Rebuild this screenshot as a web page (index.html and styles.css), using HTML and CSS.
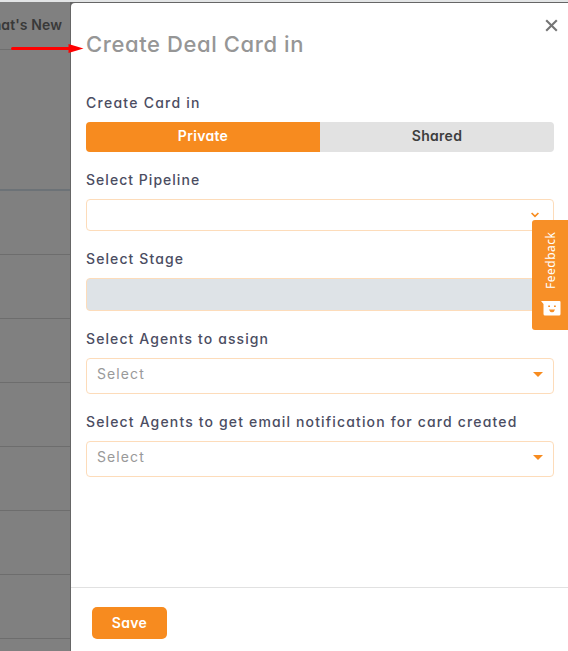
FILE: index.html
```html
<!DOCTYPE html>
<html lang="en">
<head>
<meta charset="utf-8">
<title>Create Deal Card</title>
<link rel="stylesheet" href="styles.css">
</head>
<body>
<div class="app">
  <aside class="backdrop">
    <div class="nav"><span>What's New</span></div>
    <div class="band"></div>
    <div class="row"></div><div class="row"></div><div class="row"></div><div class="row"></div>
    <div class="row"></div><div class="row"></div><div class="row"></div><div class="row"></div>
  </aside>
  <main class="drawer">
    <header class="header">
      <h1 class="title"><span>Create Deal Card in</span></h1>
      <svg class="close" width="13" height="13" viewBox="0 0 13 13"><path d="M1.200 1.200 11.800 11.800M11.800 1.200 1.200 11.800" fill="none" stroke="#757575" stroke-width="2.1"/></svg>
    </header>
    <form class="form">
      <div class="label l1"><span>Create Card in</span></div>
      <div class="segments"><div class="segment active"><span>Private</span></div><div class="segment"><span>Shared</span></div></div>
      <div class="label l2"><span>Select Pipeline</span></div>
      <div class="field pipeline"><svg width="8" height="6" viewBox="0 0 8 6"><path d="M.6 1 4 4.300 7.400 1" fill="none" stroke="#f78c1f" stroke-width="1.700"/></svg></div>
      <div class="label l3"><span>Select Stage</span></div>
      <div class="field stage"></div>
      <div class="label l4"><span>Select Agents to assign</span></div>
      <div class="field agents"><span>Select</span><i class="caret"></i></div>
      <div class="label l5"><span>Select Agents to get email notification for card created</span></div>
      <div class="field agents"><span>Select</span><i class="caret"></i></div>
    </form>
    <footer class="footer"><button class="save" type="button"><span>Save</span></button></footer>
  </main>
  <svg class="arrow" width="73" height="10" viewBox="0 0 73 10"><path d="M1.500 5.500H60" stroke="#f00" stroke-width="3" stroke-linecap="round"/><path d="M57.500 1 72.500 5.500 57.500 10Z" fill="#f00"/></svg>
  <div class="feedback">
    <span class="feedback-text">Feedback</span>
    <svg width="20" height="16" viewBox="0 0 20 16"><path d="M0 1H18.500Q19.500 1 19.500 2V14Q19.500 15.500 18 15.500H4Q2.500 15.500 2.500 14V4Z" fill="#fff"/><path d="M7.200 6.200h1.800M13 6.200h1.800" stroke="#f78f27" stroke-width="1.500"/><path d="M8 9.500H14Q13.200 12.300 11 12.300T8 9.500Z" fill="#f78f27"/></svg>
  </div>
</div>
</body>
</html>
```
FILE: styles.css
```css
* { box-sizing: border-box; }
body {
  margin: 0;
  font-family: Inter, "Liberation Sans", sans-serif;
  font-feature-settings: "cv11" 1;
  overflow: hidden;
}
.app {
  position: relative;
  display: flex;
  width: 568px;
  height: 651px;
  border-top: 2px solid #e3e5e6;
  background: #666;
}
.backdrop { width: 70px; background: #808080; overflow: hidden; }
.nav {
  display: flex;
  justify-content: flex-end;
  height: 48px;
  padding: 13px 8px 0 0;
  border-bottom: 1px solid #6f6f6f;
  color: #393939;
  font-size: 14px;
  line-height: 20px;
  font-weight: 600;
  letter-spacing: .1px;
  white-space: nowrap;
}
.band { height: 141px; border-bottom: 2px solid #6c7277; }
.row { height: 64px; border-bottom: 1px solid #6d6d6d; }
.drawer {
  display: flex;
  flex-direction: column;
  width: 497px;
  margin: 1px 0 0 1px;
  background: #fff;
  border-radius: 4px 0 0 0;
}
.header {
  display: flex;
  justify-content: space-between;
  height: 90px;
  padding: 16px 10px 0 15px;
}
.title {
  margin: 9px 0 0;
  color: #969696;
  font-size: 22px;
  line-height: 32px;
  font-weight: 500;
  letter-spacing: .6px;
}
.form { flex: 1; padding: 0 14px 0 15px; }
.label {
  height: 20px;
  margin: 18px 0 9px;
  color: #4b4d62;
  font-size: 14px;
  line-height: 20px;
  font-weight: 500;
  letter-spacing: 1.1px;
  white-space: nowrap;
}
.label.l1 { margin-top: 0; letter-spacing: 1.25px; }
.label.l2 { letter-spacing: 1.03px; }
.label.l5 { letter-spacing: 1.15px; }
.segments { display: flex; height: 30px; border-radius: 4px; overflow: hidden; }
.segment {
  flex: 1;
  background: #e2e2e2;
  color: #3d3d3d;
  font-size: 14px;
  line-height: 28px;
  font-weight: 600;
  letter-spacing: .3px;
  text-align: center;
}
.segment.active { background: #f78b1f; color: #fff; }
.field {
  display: flex;
  align-items: center;
  justify-content: space-between;
  border: 1px solid #fddcba;
  border-radius: 4px;
}
.pipeline { height: 32px; padding-right: 14px; justify-content: flex-end; }
.stage { height: 33px; background: #dee3e7; }
.agents {
  height: 36px;
  padding: 0 10px;
  color: #999;
  font-size: 14px;
  line-height: 20px;
  letter-spacing: 1.1px;
}
.agents span { margin-top: -4px; }
.caret {
  margin-top: -3px;
  border: 5px solid transparent;
  border-top-color: #f78b1f;
  border-bottom: 0;
}
.footer { height: 64px; padding: 19px 21px 0; border-top: 1px solid #e1e1e1; }
.save {
  display: block;
  width: 75px;
  height: 32px;
  padding: 0;
  border: 0;
  border-radius: 5px;
  background: #f78b1f;
  color: #fff;
  font: 600 14px/32px Inter, "Liberation Sans", sans-serif;
  font-feature-settings: "cv11" 1;
  letter-spacing: .3px;
}
.arrow { position: absolute; left: 11px; top: 41px; }
.feedback {
  position: absolute;
  right: 0;
  top: 218px;
  width: 36px;
  height: 110px;
  padding: 12px 0 0 9px;
  border-radius: 3px 0 0 3px;
  background: #f78f27;
  color: #fff;
}
.feedback-text {
  display: block;
  width: 20px;
  height: 57px;
  margin-bottom: 11px;
  font: 12px/20px "Noto Sans", sans-serif;
  letter-spacing: .5px;
  writing-mode: vertical-rl;
  transform: rotate(180deg);
}
.feedback svg { display: block; }
```
